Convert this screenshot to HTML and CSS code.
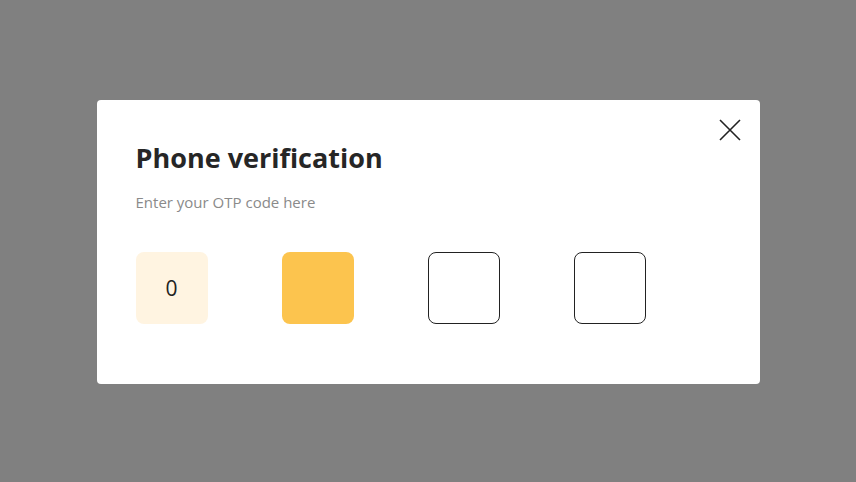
FILE: index.html
```html
<!DOCTYPE html>
<html lang="en">
<head>
  <meta charset="UTF-8" />
  <meta name="viewport" content="width=device-width, initial-scale=1" />
  <title>Phone verification</title>
  <link rel="stylesheet" href="styles.css">
</head>
<body>
  <div class="modal">
    <button class="close" aria-label="Close">
      <svg width="22" height="22" viewBox="0 0 22 22">
        <path d="M1 1 L21 21 M21 1 L1 21" stroke="#222" stroke-width="1.6" fill="none" />
      </svg>
    </button>
    <h1>Phone verification</h1>
    <p class="hint">Enter your OTP code here</p>
    <div class="otp">
      <div class="digit filled">0</div>
      <div class="digit active"></div>
      <div class="digit empty"></div>
      <div class="digit empty"></div>
    </div>
  </div>
</body>
</html>
```

FILE: styles.css
```css
body {
  font-family: "Open Sans", "Lato", sans-serif;
  background-color: #808080;
  margin: 0;
  height: 100vh;
  display: flex;
  justify-content: center;
  align-items: flex-start;
  padding-top: 100px;
  box-sizing: border-box;
}
.modal {
  position: relative;
  background: #fff;
  width: 663px;
  height: 284px;
  border-radius: 4px;
  padding: 42px 39px 0;
  box-sizing: border-box;
}
.close {
  position: absolute;
  top: 19px;
  right: 19px;
  background: none;
  border: none;
  padding: 0;
  cursor: pointer;
}
h1 {
  font-size: 27px;
  font-weight: 700;
  color: #262626;
  margin: 0;
  line-height: 32px;
}
.hint {
  font-size: 15px;
  color: #8a8a8a;
  margin: 18px 0 0;
  line-height: 20px;
}
.otp {
  display: flex;
  gap: 74px;
  margin-top: 40px;
}
.digit {
  width: 72px;
  height: 72px;
  border-radius: 8px;
  box-sizing: border-box;
  display: flex;
  align-items: center;
  justify-content: center;
  font-size: 21px;
  color: #222;
}
.filled {
  background: #fff4e1;
}
.active {
  background: #fcc44e;
}
.empty {
  border: 1px solid #222;
}
```
